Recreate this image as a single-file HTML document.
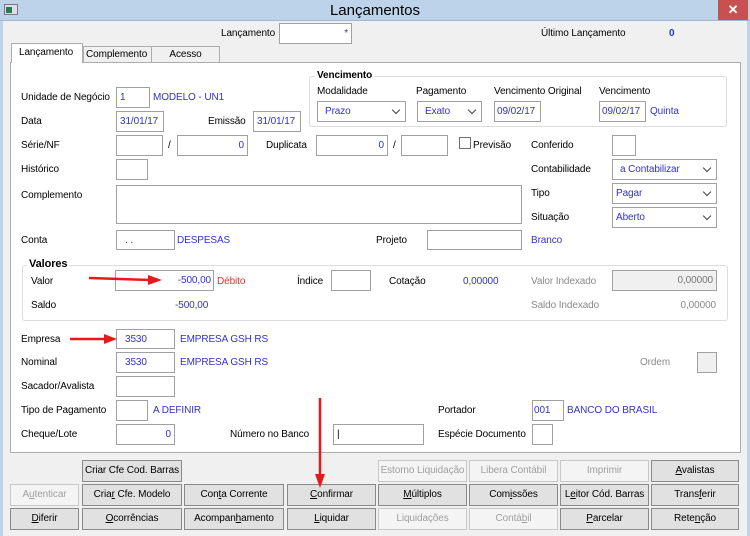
<!DOCTYPE html>
<html><head><meta charset="utf-8"><style>
*{box-sizing:border-box;margin:0;padding:0}
body{width:750px;height:536px;overflow:hidden;background:#f0f0f0;font-family:"Liberation Sans",sans-serif;font-size:10px;letter-spacing:-0.1px;color:#000;position:relative}
div,span{position:absolute;white-space:nowrap}
.l{line-height:13px}
.b{color:#3232c8}
.i{background:#fff;border:1px solid #a0a0a0;line-height:19px;padding:0 3px;color:#3232c8}
.r{text-align:right}
.s:after{content:"";position:absolute;right:6px;top:5px;width:5px;height:5px;border-right:1.5px solid #444;border-bottom:1.5px solid #444;transform:rotate(45deg)}
.bt{background:#e1e1e1;border:1px solid #8a8a8a;text-align:center;line-height:20px;height:22px}
.d{background:#f4f4f4;border-color:#c8c8c8;color:#a0a0a0}
.g{color:#8a8a8a}
</style></head><body>
<div style="left:0;top:0;width:750px;height:21px;background:#bcd3ea;border-bottom:1px solid #9fb8d3"></div>
<div style="left:4px;top:4px;width:14px;height:11px;background:#dde;border:1px solid #778"><span style="left:1px;top:2px;width:6px;height:6px;background:#2a7a4a"></span></div>
<div style="left:0;top:2px;width:750px;text-align:center;font-size:15px;letter-spacing:0">Lançamentos</div>
<div style="left:718px;top:0;width:30px;height:20px;background:#c75050;color:#fff;text-align:center;font-weight:bold;font-size:13px;line-height:19px">✕</div>
<div style="left:0;top:21px;width:3px;height:515px;background:#bcd3ea"></div>
<div style="left:747px;top:21px;width:3px;height:515px;background:#bcd3ea"></div>

<div class="l" style="left:221px;top:27px">Lançamento</div>
<div class="i r" style="left:279px;top:23px;width:73px;height:21px">*</div>
<div class="l" style="left:541px;top:27px">Último Lançamento</div>
<div class="l b" style="left:669px;top:27px;font-weight:bold">0</div>

<div style="left:10px;top:62px;width:731px;height:391px;background:#fff;border:1px solid #adadad"></div>
<div style="left:11px;top:43px;width:72px;height:20px;background:#fff;border:1px solid #adadad;border-bottom:none;padding:3px 0 0 7px">Lançamento</div>
<div style="left:83px;top:46px;width:69px;height:17px;background:#f0f0f0;border:1px solid #adadad;padding:2px 0 0 2px">Complemento</div>
<div style="left:151px;top:46px;width:69px;height:17px;background:#f0f0f0;border:1px solid #adadad;text-align:center;padding-top:2px">Acesso</div>

<div style="left:309px;top:76px;width:418px;height:51px;border:1px solid #dcdcdc;border-radius:3px"></div>
<div class="l" style="left:315px;top:69px;background:#fff;padding:0 2px;font-weight:bold">Vencimento</div>
<div class="l" style="left:317px;top:85px">Modalidade</div>
<div class="l" style="left:416px;top:85px">Pagamento</div>
<div class="l" style="left:494px;top:85px">Vencimento Original</div>
<div class="l" style="left:599px;top:85px">Vencimento</div>
<div class="i s" style="left:317px;top:101px;width:89px;height:21px;padding-left:7px">Prazo</div>
<div class="i s" style="left:417px;top:101px;width:65px;height:21px;padding-left:7px">Exato</div>
<div class="i" style="left:494px;top:101px;width:47px;height:21px;padding:0 2px">09/02/17</div>
<div class="i" style="left:599px;top:101px;width:47px;height:21px;padding:0 2px">09/02/17</div>
<div class="l b" style="left:650px;top:105px">Quinta</div>

<div class="l" style="left:21px;top:91px">Unidade de Negócio</div>
<div class="i" style="left:116px;top:87px;width:34px;height:21px">1</div>
<div class="l b" style="left:153px;top:91px">MODELO - UN1</div>
<div class="l" style="left:21px;top:115px">Data</div>
<div class="i" style="left:116px;top:111px;width:48px;height:21px">31/01/17</div>
<div class="l" style="left:208px;top:115px">Emissão</div>
<div class="i" style="left:253px;top:111px;width:48px;height:21px">31/01/17</div>

<div class="l" style="left:21px;top:139px">Série/NF</div>
<div class="i" style="left:116px;top:135px;width:47px;height:21px"></div>
<div class="l" style="left:168px;top:139px">/</div>
<div class="i r" style="left:177px;top:135px;width:71px;height:21px">0</div>
<div class="l" style="left:266px;top:139px">Duplicata</div>
<div class="i r" style="left:316px;top:135px;width:72px;height:21px">0</div>
<div class="l" style="left:393px;top:139px">/</div>
<div class="i" style="left:401px;top:135px;width:47px;height:21px"></div>
<div style="left:459px;top:137px;width:12px;height:12px;border:1px solid #707070;background:#fff"></div>
<div class="l" style="left:473px;top:139px">Previsão</div>
<div class="l" style="left:531px;top:139px">Conferido</div>
<div class="i" style="left:612px;top:135px;width:24px;height:21px"></div>

<div class="l" style="left:21px;top:163px">Histórico</div>
<div class="i" style="left:116px;top:159px;width:32px;height:21px"></div>
<div class="l" style="left:531px;top:163px">Contabilidade</div>
<div class="i s" style="left:612px;top:159px;width:105px;height:21px;padding-left:7px">a Contabilizar</div>
<div class="l" style="left:21px;top:189px">Complemento</div>
<div class="i" style="left:116px;top:185px;width:406px;height:39px"></div>
<div class="l" style="left:531px;top:187px">Tipo</div>
<div class="i s" style="left:612px;top:183px;width:105px;height:21px">Pagar</div>
<div class="l" style="left:531px;top:211px">Situação</div>
<div class="i s" style="left:612px;top:207px;width:105px;height:21px">Aberto</div>

<div class="l" style="left:21px;top:234px">Conta</div>
<div class="i" style="left:116px;top:230px;width:59px;height:20px;padding-left:8px">. .</div>
<div class="l b" style="left:177px;top:234px">DESPESAS</div>
<div class="l" style="left:376px;top:234px">Projeto</div>
<div class="i" style="left:427px;top:230px;width:95px;height:20px"></div>
<div class="l b" style="left:531px;top:234px">Branco</div>

<div style="left:22px;top:265px;width:706px;height:56px;border:1px solid #dcdcdc;border-radius:3px"></div>
<div class="l" style="left:27px;top:258px;background:#fff;padding:0 2px;font-weight:bold;font-size:11px">Valores</div>
<div class="l" style="left:31px;top:275px">Valor</div>
<div class="i r" style="left:115px;top:270px;width:99px;height:21px;padding-right:2px">-500,00</div>
<div class="l" style="left:217px;top:275px;color:#e03030">Débito</div>
<div class="l" style="left:297px;top:275px">Índice</div>
<div class="i" style="left:331px;top:270px;width:40px;height:21px"></div>
<div class="l" style="left:389px;top:275px">Cotação</div>
<div class="l b" style="left:463px;top:275px">0,00000</div>
<div class="l g" style="left:531px;top:275px">Valor Indexado</div>
<div class="i r" style="left:612px;top:270px;width:105px;height:21px;background:#f0f0f0;color:#777">0,00000</div>
<div class="l" style="left:31px;top:299px">Saldo</div>
<div class="l b" style="left:175px;top:299px">-500,00</div>
<div class="l g" style="left:531px;top:299px">Saldo Indexado</div>
<div class="l g r" style="left:640px;top:299px;width:76px">0,00000</div>

<div class="l" style="left:21px;top:333px">Empresa</div>
<div class="i" style="left:116px;top:329px;width:59px;height:20px;padding-left:8px">3530</div>
<div class="l b" style="left:180px;top:333px">EMPRESA GSH RS</div>
<div class="l" style="left:21px;top:356px">Nominal</div>
<div class="i" style="left:116px;top:352px;width:59px;height:21px;padding-left:8px">3530</div>
<div class="l b" style="left:180px;top:356px">EMPRESA GSH RS</div>
<div class="l g" style="left:640px;top:356px">Ordem</div>
<div class="i" style="left:697px;top:352px;width:20px;height:21px;background:#f0f0f0"></div>
<div class="l" style="left:21px;top:380px">Sacador/Avalista</div>
<div class="i" style="left:116px;top:376px;width:59px;height:21px"></div>
<div class="l" style="left:21px;top:404px">Tipo de Pagamento</div>
<div class="i" style="left:116px;top:400px;width:32px;height:21px"></div>
<div class="l b" style="left:153px;top:404px">A DEFINIR</div>
<div class="l" style="left:438px;top:404px">Portador</div>
<div class="i" style="left:532px;top:400px;width:32px;height:21px;padding:0 1px">001</div>
<div class="l b" style="left:567px;top:404px">BANCO DO BRASIL</div>
<div class="l" style="left:21px;top:428px">Cheque/Lote</div>
<div class="i r" style="left:116px;top:424px;width:59px;height:21px">0</div>
<div class="l" style="left:230px;top:428px">Número no Banco</div>
<div class="i" style="left:333px;top:424px;width:91px;height:21px;color:#000">|</div>
<div class="l" style="left:438px;top:428px">Espécie Documento</div>
<div class="i" style="left:532px;top:424px;width:21px;height:21px"></div>

<div class="bt" style="left:82px;top:460px;width:100px">Criar Cfe Cod. Barras</div>
<div class="bt d" style="left:378px;top:460px;width:89px">Estorno Liquidação</div>
<div class="bt d" style="left:469px;top:460px;width:89px">Libera Contábil</div>
<div class="bt d" style="left:560px;top:460px;width:89px">Imprimir</div>
<div class="bt" style="left:651px;top:460px;width:88px"><u>A</u>valistas</div>
<div class="bt d" style="left:10px;top:484px;width:69px">A<u>u</u>tenticar</div>
<div class="bt" style="left:82px;top:484px;width:100px">Cria<u>r</u> Cfe. Modelo</div>
<div class="bt" style="left:184px;top:484px;width:100px">Con<u>t</u>a Corrente</div>
<div class="bt" style="left:287px;top:484px;width:89px"><u>C</u>onfirmar</div>
<div class="bt" style="left:378px;top:484px;width:89px"><u>M</u>últiplos</div>
<div class="bt" style="left:469px;top:484px;width:89px">Com<u>i</u>ssões</div>
<div class="bt" style="left:560px;top:484px;width:89px">L<u>e</u>itor Cód. Barras</div>
<div class="bt" style="left:651px;top:484px;width:88px">Trans<u>f</u>erir</div>
<div class="bt" style="left:10px;top:508px;width:69px"><u>D</u>iferir</div>
<div class="bt" style="left:82px;top:508px;width:100px"><u>O</u>corrências</div>
<div class="bt" style="left:184px;top:508px;width:100px">Acompan<u>h</u>amento</div>
<div class="bt" style="left:287px;top:508px;width:89px"><u>L</u>iquidar</div>
<div class="bt d" style="left:378px;top:508px;width:89px">Liquidações</div>
<div class="bt d" style="left:469px;top:508px;width:89px">Contá<u>b</u>il</div>
<div class="bt" style="left:560px;top:508px;width:89px"><u>P</u>arcelar</div>
<div class="bt" style="left:651px;top:508px;width:88px">Rete<u>n</u>ção</div>

<svg style="position:absolute;left:0;top:0" width="750" height="536">
<g stroke="#e8181a" stroke-width="2.5" fill="#e8181a">
<line x1="89" y1="278" x2="150" y2="280"/><polygon points="148,275 162,280 148,285" stroke="none"/>
<line x1="70" y1="339" x2="106" y2="339"/><polygon points="104,334 117,339 104,344" stroke="none"/>
<line x1="320" y1="398" x2="320" y2="476"/><polygon points="315,474 320,488 325,474" stroke="none"/>
</g></svg>
</body></html>
